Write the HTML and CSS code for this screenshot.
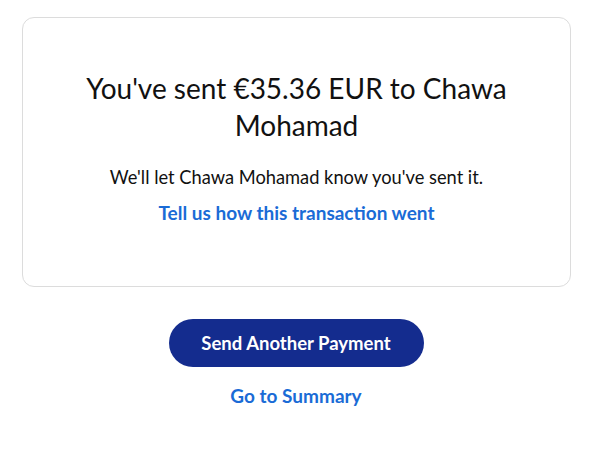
FILE: index.html
```html
<!DOCTYPE html>
<html lang="en">
<head>
<meta charset="utf-8">
<title>Payment sent</title>
<link rel="stylesheet" href="styles.css">
</head>
<body>
<main class="page">
  <section class="card">
    <h1 class="title">You've sent €35.36 EUR to Chawa Mohamad</h1>
    <p class="note">We'll let Chawa Mohamad know you've sent it.</p>
    <a class="link feedback" href="#">Tell us how this transaction went</a>
  </section>
  <div class="actions">
    <button class="primary" type="button">Send Another Payment</button>
    <a class="link" href="#">Go to Summary</a>
  </div>
</main>
</body>
</html>
```

FILE: styles.css
```css
* { box-sizing: border-box; }
html, body { margin: 0; padding: 0; background: #fff; }
body {
  font-family: "Lato", "Noto Sans", sans-serif;
  color: #111;
}
.page {
  padding: 17px 19px 0 22px;
}
.card {
  border: 1px solid #dcdcdc;
  border-radius: 12px;
  height: 270px;
  padding: 52px 40px 0;
  display: flex;
  flex-direction: column;
  align-items: center;
  text-align: center;
}
.title {
  margin: 0;
  font-size: 28px;
  line-height: 37px;
  font-weight: 400;
  max-width: 440px;
}
.note {
  margin: 21px 0 0;
  font-size: 18.3px;
  line-height: 24px;
}
.link {
  color: #1a6bd6;
  font-weight: 700;
  font-size: 19px;
  line-height: 24px;
  text-decoration: none;
}
.feedback { margin-top: 12px; }
.actions {
  display: flex;
  flex-direction: column;
  align-items: center;
  padding-top: 32px;
  margin-left: -1px;
}
.primary {
  width: 255px;
  height: 48px;
  border: 0;
  border-radius: 24px;
  background: #142c8e;
  color: #fff;
  font-family: inherit;
  font-size: 18.5px;
  font-weight: 700;
}
.actions .link { margin-top: 17px; }
```
